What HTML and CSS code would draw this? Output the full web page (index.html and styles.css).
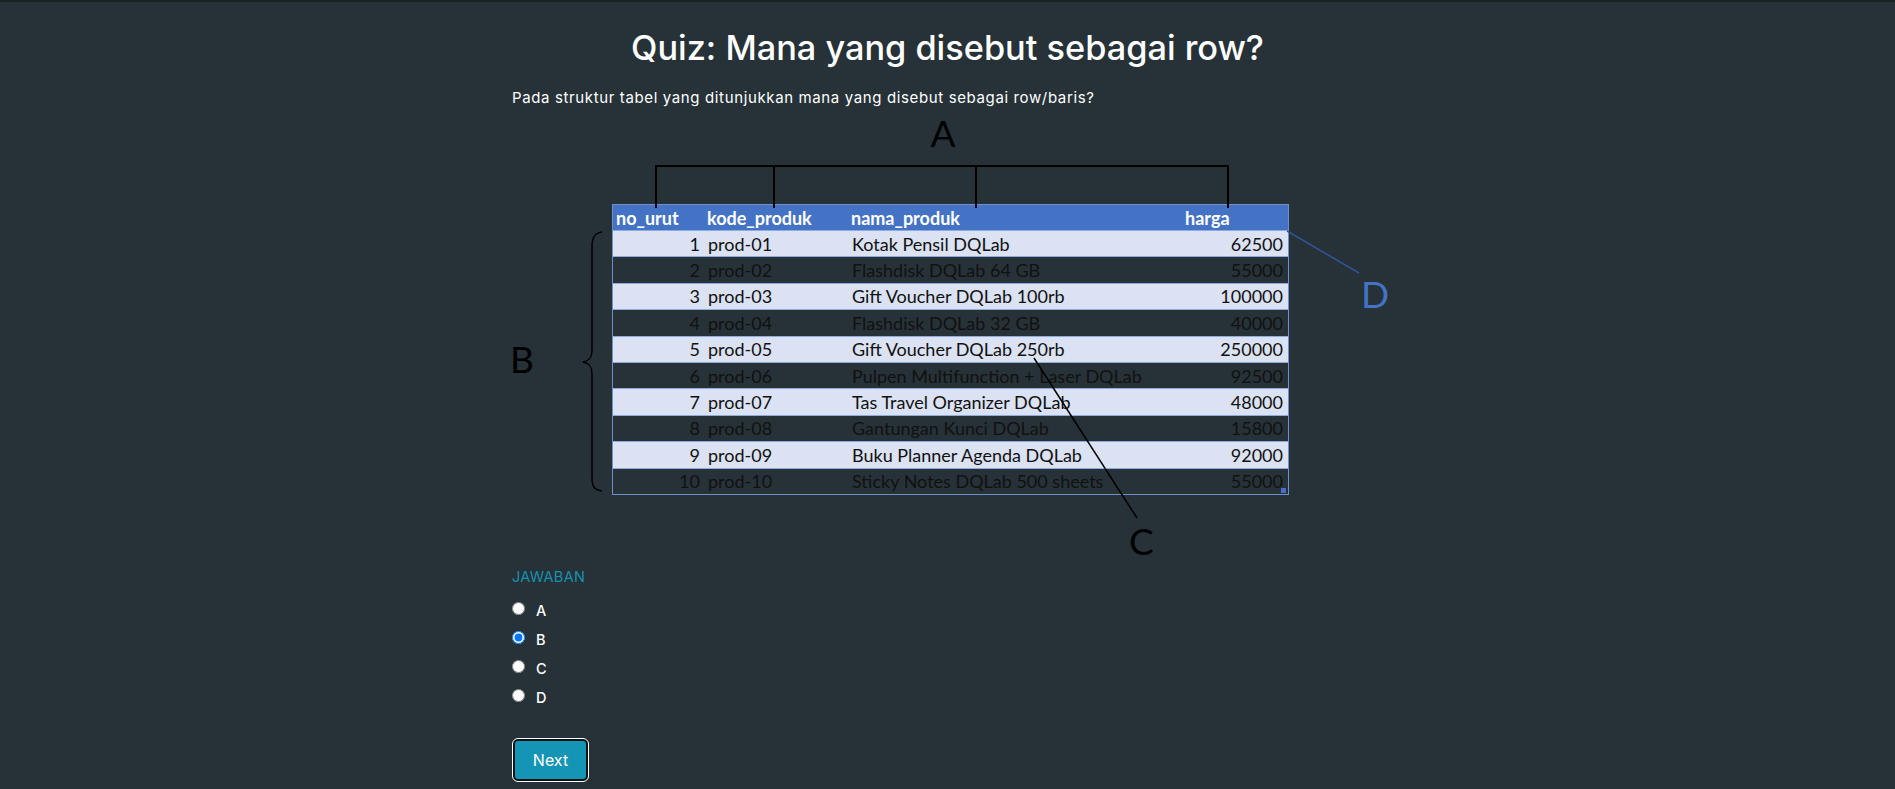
FILE: index.html
```html
<!DOCTYPE html>
<html lang="id">
<head>
<meta charset="utf-8">
<title>Quiz</title>
<link rel="stylesheet" href="styles.css">
</head>
<body>
<div class="topbar"></div>
<main class="quiz">
  <h1 class="quiz-title">Quiz: Mana yang disebut sebagai row?</h1>
  <p class="quiz-question">Pada struktur tabel yang ditunjukkan mana yang disebut sebagai row/baris?</p>

  <figure class="diagram">
    <div class="sheet-wrap">
      <table class="sheet">
        <colgroup>
          <col class="c1"><col class="c2"><col class="c3"><col class="c4">
        </colgroup>
        <thead>
          <tr><th>no_urut</th><th>kode_produk</th><th>nama_produk</th><th>harga</th></tr>
        </thead>
        <tbody>
          <tr class="odd"><td class="num">1</td><td>prod-01</td><td>Kotak Pensil DQLab</td><td class="num">62500</td></tr>
          <tr><td class="num">2</td><td>prod-02</td><td>Flashdisk DQLab 64 GB</td><td class="num">55000</td></tr>
          <tr class="odd"><td class="num">3</td><td>prod-03</td><td>Gift Voucher DQLab 100rb</td><td class="num">100000</td></tr>
          <tr><td class="num">4</td><td>prod-04</td><td>Flashdisk DQLab 32 GB</td><td class="num">40000</td></tr>
          <tr class="odd"><td class="num">5</td><td>prod-05</td><td>Gift Voucher DQLab 250rb</td><td class="num">250000</td></tr>
          <tr><td class="num">6</td><td>prod-06</td><td>Pulpen Multifunction + Laser DQLab</td><td class="num">92500</td></tr>
          <tr class="odd"><td class="num">7</td><td>prod-07</td><td>Tas Travel Organizer DQLab</td><td class="num">48000</td></tr>
          <tr><td class="num">8</td><td>prod-08</td><td>Gantungan Kunci DQLab</td><td class="num">15800</td></tr>
          <tr class="odd"><td class="num">9</td><td>prod-09</td><td>Buku Planner Agenda DQLab</td><td class="num">92000</td></tr>
          <tr><td class="num">10</td><td>prod-10</td><td>Sticky Notes DQLab 500 sheets</td><td class="num">55000</td></tr>
        </tbody>
      </table>
    </div>
    <svg class="annot" width="895" height="455" viewBox="0 0 895 455">
      <path d="M156 98 V56 H728 V98 M274 56 V98 M476 56 V98" fill="none" stroke="#000" stroke-width="2"/>
      <path d="M102 122 C95 123 92 127 92 136 L92 240 C92 248 89 251 83 252 C89 253 92 256 92 264 L92 368 C92 377 95 380 102 381" fill="none" stroke="#000" stroke-width="1.5"/>
      <path d="M534 248 L637 408" stroke="#000" stroke-width="1.5"/>
      <path d="M787 121 L859 163" stroke="#2f5597" stroke-width="1.5"/>
      <text class="tag" x="443" y="37" text-anchor="middle">A</text>
      <text class="tag" x="10" y="263">B</text>
      <text class="tag" x="629" y="445">C</text>
      <text class="tag tag-blue" x="861" y="198">D</text>
    </svg>
  </figure>

  <section class="answer">
    <h2 class="answer-title">JAWABAN</h2>
    <label class="option"><input type="radio" name="ans" value="A"><span>A</span></label>
    <label class="option"><input type="radio" name="ans" value="B" checked><span>B</span></label>
    <label class="option"><input type="radio" name="ans" value="C"><span>C</span></label>
    <label class="option"><input type="radio" name="ans" value="D"><span>D</span></label>
    <button class="btn-next" type="button">Next</button>
  </section>
</main>
</body>
</html>
```

FILE: styles.css
```css
html, body {
  margin: 0;
  padding: 0;
}
body {
  background: #263238;
  color: #fff;
  font-family: Inter, "Open Sans", sans-serif;
  min-height: 789px;
}
.topbar {
  height: 2px;
  background: #1a2424;
}
.quiz {
  width: 871px;
  margin: 0 auto;
  box-sizing: border-box;
}
.quiz-title {
  margin: 22px 0 0;
  font-size: 34.3px;
  line-height: 48px;
  font-weight: 500;
  text-align: center;
  letter-spacing: 0;
}
.quiz-question {
  margin: 15px 0 2px;
  font-size: 15px;
  line-height: 21px;
  font-weight: 400;
  letter-spacing: 0.63px;
}
.diagram {
  position: relative;
  width: 895px;
  height: 455px;
  margin: 0 0 0 -12px;
}
.sheet-wrap {
  position: relative;
  width: 675px;
  height: 290px;
  margin: 0;
  left: 112px;
  top: 94px;
}
.sheet-wrap::after {
  content: "";
  position: absolute;
  right: 1px;
  bottom: 1px;
  width: 5px;
  height: 5px;
  background: #4a6bd0;
}
.sheet {
  width: 675px;
  table-layout: fixed;
  border-collapse: separate;
  border-spacing: 0;
  font-family: Lato, "Open Sans", sans-serif;
  font-size: 18px;
  letter-spacing: 0;
  color: #111;
  border: 1px solid #6f8fca;
}
.c1 { width: 91px; }
.c2 { width: 144px; }
.c3 { width: 334px; }
.c4 { width: 106px; }
.sheet thead tr {
  height: 25px;
}
.sheet tbody tr {
  height: 26.4px;
}
.sheet th,
.sheet td {
  padding: 0 4px;
  line-height: 18px;
  white-space: nowrap;
  overflow: hidden;
  vertical-align: middle;
  text-align: left;
}
.sheet th {
  background: #4472c4;
  color: #fff;
  font-weight: 700;
  padding-left: 3px;
}
.sheet td {
  border-top: 1px solid #8faadc;
}
.sheet .num {
  text-align: right;
  padding-right: 5px;
}
.sheet td:first-child {
  padding-right: 4px;
}
.sheet .odd td {
  background: #dae2f3;
}
.annot {
  position: absolute;
  left: 0;
  top: 0;
  pointer-events: none;
}
.tag {
  font-family: Lato, "Open Sans", sans-serif;
  font-size: 37px;
  font-weight: 400;
  fill: #000;
}
.tag-blue {
  fill: #4472c4;
}
.answer {
  display: flex;
  flex-direction: column;
  align-items: flex-start;
}
.answer-title {
  margin: 2px 0 9px;
  font-size: 14.5px;
  line-height: 20px;
  font-weight: 400;
  color: #1790b0;
  letter-spacing: 0.3px;
}
.option {
  display: flex;
  align-items: center;
  height: 29px;
  font-size: 14.5px;
  font-weight: 500;
  color: #fff;
}
.option input {
  margin: 0 11px 0 0;
  width: 13px;
  height: 13px;
  position: relative;
  top: -2px;
}
.btn-next {
  margin: 27px 0 0 1px;
  width: 75px;
  height: 42px;
  background: #1595b5;
  color: #fff;
  font-family: Inter, "Open Sans", sans-serif;
  font-size: 16px;
  border: 2px solid #111;
  outline: 1px solid #fff;
  border-radius: 5px;
  padding: 0;
  cursor: pointer;
}
```
